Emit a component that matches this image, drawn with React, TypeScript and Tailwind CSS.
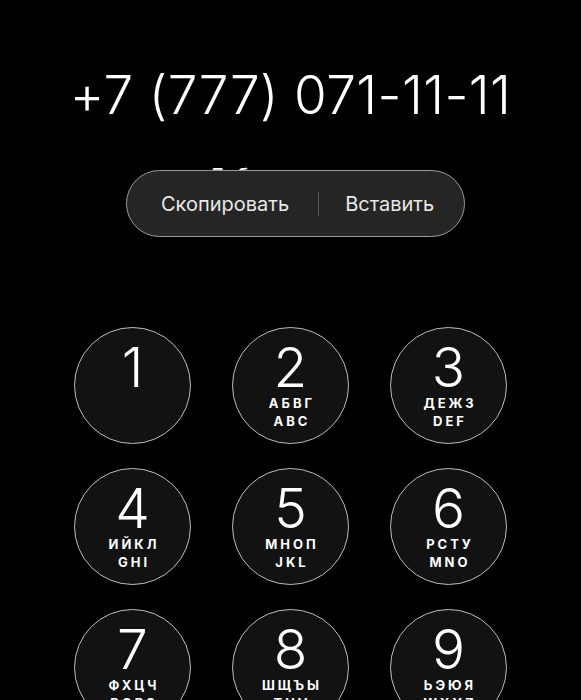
const keys: { d: string; ru?: string; en?: string }[] = [
  { d: "1" },
  { d: "2", ru: "АБВГ", en: "ABC" },
  { d: "3", ru: "ДЕЖЗ", en: "DEF" },
  { d: "4", ru: "ИЙКЛ", en: "GHI" },
  { d: "5", ru: "МНОП", en: "JKL" },
  { d: "6", ru: "РСТУ", en: "MNO" },
  { d: "7", ru: "ФХЦЧ", en: "PQRS" },
  { d: "8", ru: "ШЩЪЫ", en: "TUV" },
  { d: "9", ru: "ЬЭЮЯ", en: "WXYZ" },
];

export default function App() {
  return (
    <div className="h-[700px] w-full overflow-hidden bg-black text-white font-['Inter','Noto_Sans',sans-serif]">
      {/* number */}
      <div className="pt-[63px] text-center text-[53px] font-light leading-[64px] tracking-[0.4px]">
        +7 (777) 071-11-11
      </div>

      {/* label under the number, covered by the edit menu */}
      <div className="relative mt-[37px] flex justify-center">
        <span className="text-xl leading-6">Добавить номер</span>
        <div className="absolute left-[126px] top-[6px] flex h-[67px] w-[339px] items-center rounded-full border border-[#9a9a9a] bg-[#252525] text-[20px] text-[#e8e8e8]">
          <span className="pl-[34px] pr-[29px]">Скопировать</span>
          <span className="h-[24px] w-px bg-[#555]" />
          <span className="pl-[26px]">Вставить</span>
        </div>
      </div>

      {/* keypad */}
      <div className="mx-auto mt-[139px] grid w-[433px] grid-cols-3 gap-x-[41px] gap-y-[24px]">
        {keys.map((k) => (
          <div
            key={k.d}
            className="flex h-[117px] w-[117px] flex-col items-center rounded-full border border-[#bdbdbd] bg-[#121212]"
          >
            <span className="mt-[12px] text-[55px] font-light leading-[54px]">{k.d}</span>
            {k.ru && (
              <span className="pl-[3px] text-[13px] font-bold leading-[18px] tracking-[3px]">{k.ru}</span>
            )}
            {k.en && (
              <span className="pl-[3px] text-[13px] font-bold leading-[18px] tracking-[3px]">{k.en}</span>
            )}
          </div>
        ))}
      </div>
    </div>
  );
}
